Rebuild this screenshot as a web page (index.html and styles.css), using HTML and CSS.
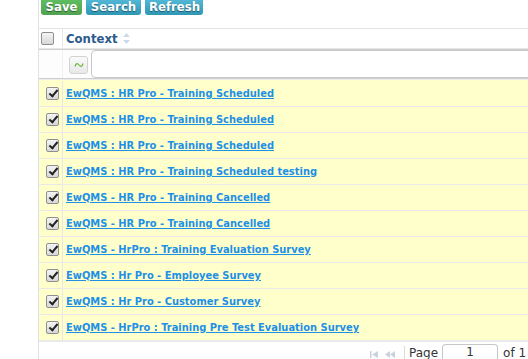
FILE: index.html
```html
<!DOCTYPE html>
<html>
<head>
<meta charset="utf-8">
<link rel="stylesheet" href="styles.css">
</head>
<body>
<div class="panel">
  <div class="toolbar">
    <button class="btn btn-save">Save</button>
    <button class="btn btn-info">Search</button>
    <button class="btn btn-info">Refresh</button>
  </div>
  <div class="head">
    <div class="c-check"><span class="cb"></span></div>
    <div class="c-main"><span class="head-title">Context</span>
      <svg class="sort" width="7" height="11" viewBox="0 0 7 11"><path d="M3.5 0L7 4H0z" fill="#c9dbea"/><path d="M3.5 11L7 7H0z" fill="#c9dbea"/></svg>
    </div>
  </div>
  <div class="filter">
    <div class="c-check"></div>
    <div class="c-main filter-main">
      <span class="fbtn"><svg width="10" height="6" viewBox="0 0 10 6"><path d="M1 4.5C2 1 3.5 1 5 3s3 2 4-1.5" fill="none" stroke="#6cb833" stroke-width="1.2"/></svg></span>
      <span class="finput"></span>
    </div>
  </div>
  <div class="rows">
    <div class="row"><div class="c-check"><span class="cb on"></span></div><div class="c-main"><a href="#">EwQMS : HR Pro - Training Scheduled</a></div></div>
    <div class="row"><div class="c-check"><span class="cb on"></span></div><div class="c-main"><a href="#">EwQMS : HR Pro - Training Scheduled</a></div></div>
    <div class="row"><div class="c-check"><span class="cb on"></span></div><div class="c-main"><a href="#">EwQMS : HR Pro - Training Scheduled</a></div></div>
    <div class="row"><div class="c-check"><span class="cb on"></span></div><div class="c-main"><a href="#">EwQMS : HR Pro - Training Scheduled testing</a></div></div>
    <div class="row"><div class="c-check"><span class="cb on"></span></div><div class="c-main"><a href="#">EwQMS - HR Pro - Training Cancelled</a></div></div>
    <div class="row"><div class="c-check"><span class="cb on"></span></div><div class="c-main"><a href="#">EwQMS - HR Pro - Training Cancelled</a></div></div>
    <div class="row"><div class="c-check"><span class="cb on"></span></div><div class="c-main"><a href="#">EwQMS - HrPro : Training Evaluation Survey</a></div></div>
    <div class="row"><div class="c-check"><span class="cb on"></span></div><div class="c-main"><a href="#">EwQMS : Hr Pro - Employee Survey</a></div></div>
    <div class="row"><div class="c-check"><span class="cb on"></span></div><div class="c-main"><a href="#">EwQMS : Hr Pro - Customer Survey</a></div></div>
    <div class="row"><div class="c-check"><span class="cb on"></span></div><div class="c-main"><a href="#">EwQMS - HrPro : Training Pre Test Evaluation Survey</a></div></div>
  </div>
  <div class="pager">
    <svg class="pico" width="9" height="7" viewBox="0 0 9 7"><rect x="0" y="0" width="1.5" height="7" fill="#c8d3dc"/><path d="M2 3.5L8 0v7z" fill="#c8d3dc"/></svg>
    <svg class="pico" width="11" height="7" viewBox="0 0 11 7"><path d="M0 3.5L5 0v7z M5 3.5L10 0v7z" fill="#c8d3dc"/></svg>
    <span class="psep"></span>
    <span class="ptext">Page</span>
    <span class="pinput">1</span>
    <span class="ptext">of 1</span>
  </div>
</div>
</body>
</html>
```
FILE: styles.css
```css
html, body { margin: 0; padding: 0; background: #fff; overflow: hidden; }
body { font-family: "DejaVu Sans Condensed", "DejaVu Sans", sans-serif; width: 528px; height: 359px; }
.panel { margin-left: 38px; border-left: 1px solid #e2e2e2; width: 600px; }
.toolbar { height: 28px; border-bottom: 1px solid #e4e4e4; display: flex; gap: 4px; padding-left: 2px; align-items: flex-start; }
.btn { margin-top: -4px; height: 19px; border: 0; border-radius: 3px; padding: 0 4px; font-family: inherit; font-weight: bold; font-size: 13px; color: #fff; text-shadow: 0 1px 1px rgba(0,0,0,0.45); line-height: 21px; }
.btn-save { background: linear-gradient(#62c462, #51a351); width: 41px; }
.btn-info { background: linear-gradient(#5bc0de, #2f96b4); }
.btn-info:nth-child(2) { width: 55px; }
.btn-info:nth-child(3) { width: 58px; }
.head, .filter, .row { display: flex; }
.c-check { width: 23px; border-right: 1px solid #e6e6e6; flex: none; display: flex; align-items: center; }
.c-main { flex: 1; display: flex; align-items: center; padding-left: 3px; }
.head { height: 18px; border-bottom: 1px solid #e6e6e6; padding-bottom: 1px; }
.head .c-check { padding-left: 2px; width: 21px; }
.head-title { font-weight: bold; font-size: 13px; color: #2c5a8c; }
.sort { margin-left: 5px; }
.filter { height: 28px; border-top: 1px solid #cfcfcf; border-bottom: 1px solid #cfcfcf; background: #fdfdfd; }
.filter .c-check { border-right-color: #f0f0f0; }
.filter-main { padding-left: 6px; }
.fbtn { width: 17px; height: 16px; border: 1px solid #d2d2d2; border-radius: 3px; background: linear-gradient(#fafafa, #e8e8e8); display: flex; align-items: center; justify-content: center; margin-top: 1px; }
.finput { margin-left: 3px; height: 26px; flex: 1; border: 1px solid #c8c8c8; border-radius: 4px; background: #fff; align-self: flex-start; }
.rows { border-top: 1px solid #ececec; padding-top: 1px; background: #ffffcc; }
.row { height: 25px; background: #ffffcc; border-bottom: 1px solid #e9e9e9; }
.row .c-check { justify-content: center; padding-left: 4px; width: 19px; }
.row a { font-weight: bold; font-size: 11px; color: #1e90e6; text-decoration: underline; }
.cb { width: 11px; height: 11px; border: 1px solid #8f8f8f; border-radius: 2px; background: linear-gradient(#f4f4f4, #d8d8d8); position: relative; box-sizing: content-box; }
.cb.on::after { content: ""; position: absolute; left: 4px; top: 0px; width: 3px; height: 7px; border: solid #222; border-width: 0 2px 2px 0; transform: rotate(40deg); }
.pager { height: 18px; border-top: 1px solid #ececec; display: flex; align-items: flex-end; padding-left: 331px; gap: 0; }
.pico { margin-right: 6px; margin-bottom: 2px; }
.psep { width: 1px; height: 14px; background: #dcdcdc; margin-left: 2px; margin-right: 4px; }
.ptext { font-family: "DejaVu Sans", sans-serif; font-size: 12px; color: #333; line-height: 14px; }
.pinput { width: 54px; height: 15px; border: 1px solid #c6c6c6; border-bottom: 0; border-radius: 4px 4px 0 0; margin: 0 5px 0 4px; font-family: "DejaVu Sans", sans-serif; font-size: 12px; color: #333; text-align: center; line-height: 15px; }
```
